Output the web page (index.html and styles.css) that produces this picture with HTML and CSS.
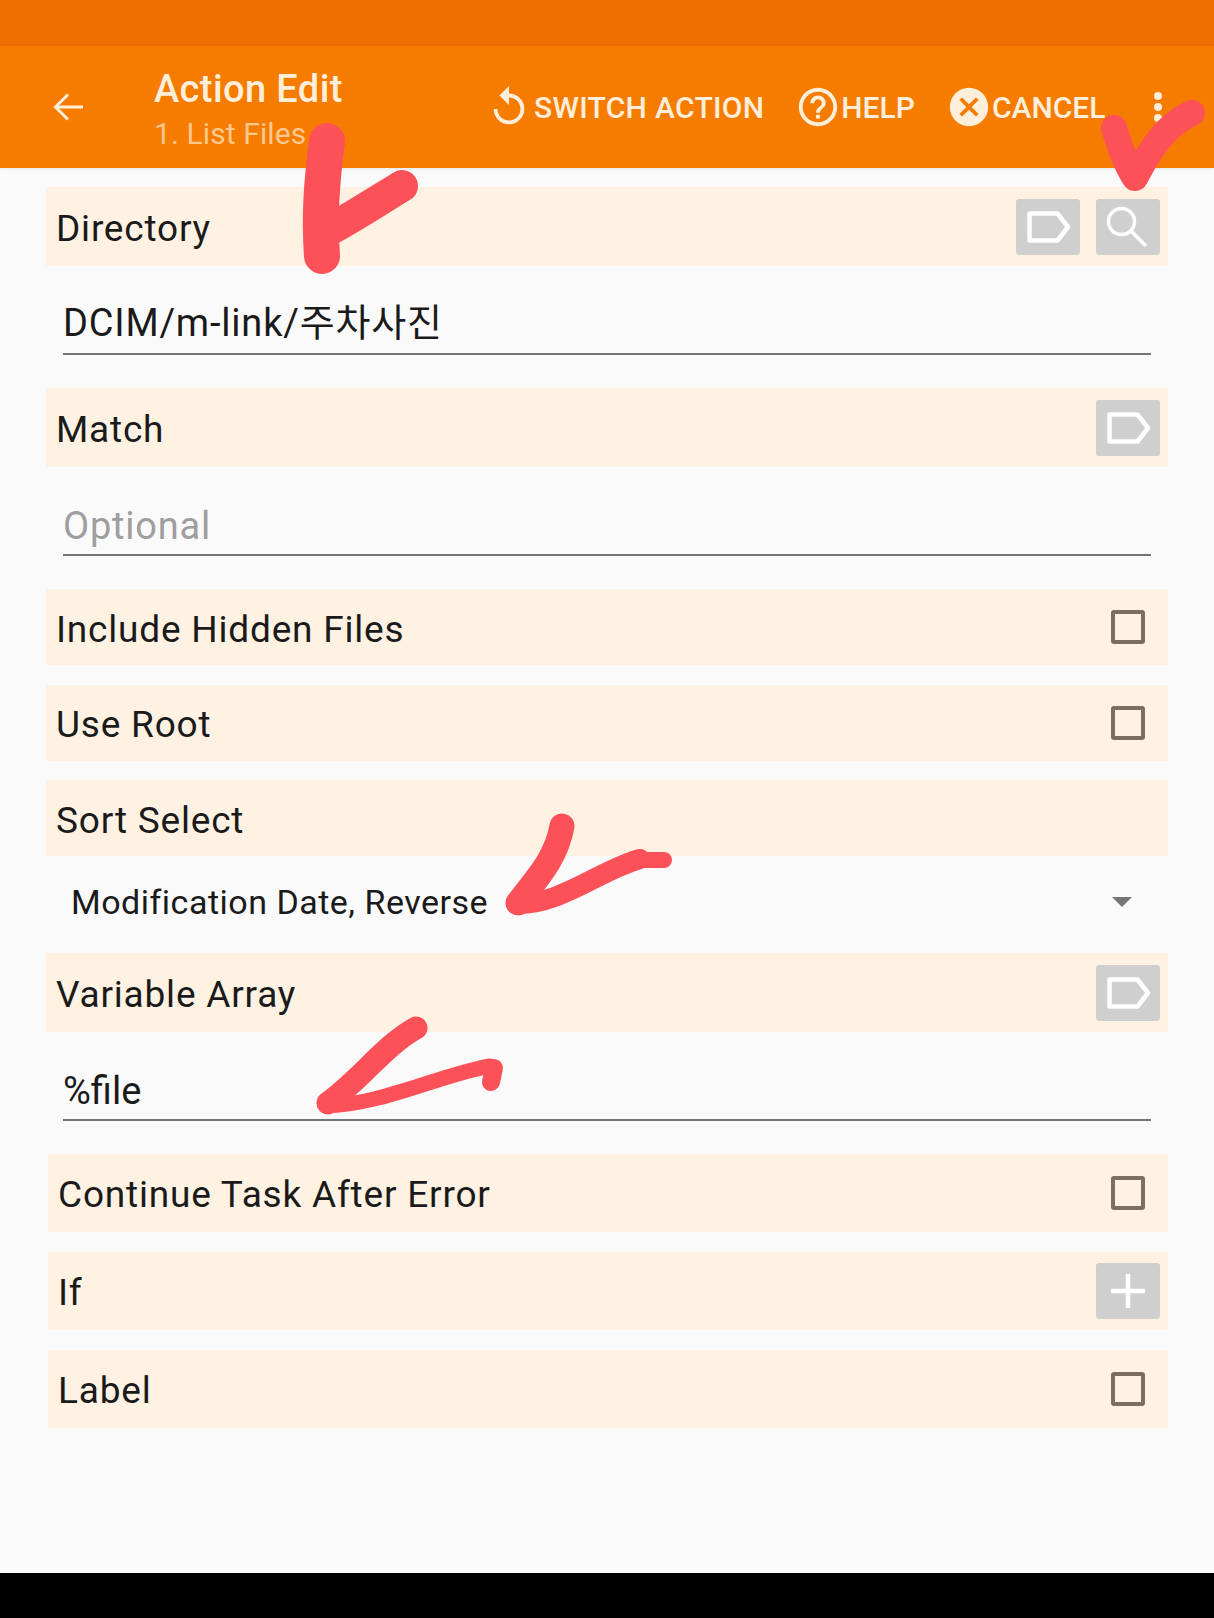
FILE: index.html
```html
<!DOCTYPE html>
<html lang="en">
<head>
  <meta charset="UTF-8" />
  <meta name="viewport" content="width=device-width, initial-scale=1.0" />
  <title>Action Edit</title>
  <link rel="stylesheet" href="styles.css">
</head>
<body>
  <div class="screen">
    <div class="status-bar"></div>
    <header class="app-bar">
      <svg class="back-icon" viewBox="0 0 32 32"><path d="M30 16H3M15 3.500 2.500 16 15 28.500" /></svg>
      <div class="titles">
        <h1>Action Edit</h1>
        <p>1. List Files</p>
      </div>
      <button class="bar-btn switch">
        <svg class="bar-icon" viewBox="0 0 24 24"><path d="M12 5V1L7 6l5 5V7c3.310 0 6 2.690 6 6s-2.690 6-6 6-6-2.690-6-6H4c0 4.420 3.580 8 8 8s8-3.580 8-8-3.580-8-8-8z" /></svg>
        SWITCH ACTION
      </button>
      <button class="bar-btn help">
        <svg class="bar-icon" viewBox="0 0 24 24"><path d="M11 18h2v-2h-2v2zm1-16C6.480 2 2 6.480 2 12s4.480 10 10 10 10-4.480 10-10S17.520 2 12 2zm0 18c-4.410 0-8-3.590-8-8s3.590-8 8-8 8 3.590 8 8-3.590 8-8 8zm0-14c-2.210 0-4 1.790-4 4h2c0-1.100.9-2 2-2s2 .9 2 2c0 2-3 1.750-3 5h2c0-2.250 3-2.500 3-5 0-2.210-1.790-4-4-4z" /></svg>
        HELP
      </button>
      <button class="bar-btn cancel">
        <svg class="bar-icon" viewBox="0 0 24 24"><path d="M12 2C6.470 2 2 6.470 2 12s4.470 10 10 10 10-4.470 10-10S17.530 2 12 2zm5 13.590L15.590 17 12 13.410 8.410 17 7 15.590 10.590 12 7 8.410 8.410 7 12 10.590 15.590 7 17 8.410 13.410 12 17 15.590z" /></svg>
        CANCEL
      </button>
      <span class="more"><i></i><i></i><i></i></span>
    </header>

    <main class="form">
      <div class="row tall">
        <span class="label">Directory</span>
        <div class="actions">
          <button class="square"><svg viewBox="0 0 64 56"><path d="M13.500 14.500h28L52 28 41.500 41.500h-28z" /></svg></button>
          <button class="square"><svg class="thin" viewBox="0 0 64 56"><circle cx="25.500" cy="22.500" r="13" /><path d="M35 32l15 15" /></svg></button>
        </div>
      </div>
      <div class="field">DCIM/m-link/주차사진</div>

      <div class="row tall">
        <span class="label">Match</span>
        <div class="actions">
          <button class="square"><svg viewBox="0 0 64 56"><path d="M13.500 14.500h28L52 28 41.500 41.500h-28z" /></svg></button>
        </div>
      </div>
      <div class="field placeholder">Optional</div>

      <div class="row"><span class="label">Include Hidden Files</span><span class="checkbox"></span></div>
      <div class="row"><span class="label">Use Root</span><span class="checkbox"></span></div>
      <div class="row flush"><span class="label">Sort Select</span></div>
      <div class="select">
        <span>Modification Date, Reverse</span>
        <span class="caret"></span>
      </div>

      <div class="row tall">
        <span class="label">Variable Array</span>
        <div class="actions">
          <button class="square"><svg viewBox="0 0 64 56"><path d="M13.500 14.500h28L52 28 41.500 41.500h-28z" /></svg></button>
        </div>
      </div>
      <div class="field tight">%file</div>

      <div class="row inset"><span class="label">Continue Task After Error</span><span class="checkbox"></span></div>
      <div class="row inset"><span class="label">If</span>
        <div class="actions">
          <button class="square"><svg viewBox="0 0 64 56"><path d="M15 28h34M32 11v34" /></svg></button>
        </div>
      </div>
      <div class="row inset"><span class="label">Label</span><span class="checkbox"></span></div>
    </main>

    <div class="nav-bar"></div>

    <!-- hand drawn check marks on top of the screenshot -->
    <svg class="marks" viewBox="0 0 1214 1618">
      <path class="mark" stroke-width="36" d="M327 141C322 180 319 215 322 256" />
      <path class="mark" stroke-width="32" d="M325 232C345 222 368 207 402 186" />
      <path class="mark" stroke-width="26" d="M1114 128C1120 148 1126 165 1135 178C1150 150 1165 125 1192 113" />
      <path class="mark" stroke-width="25" d="M562 826C556 860 535 880 518 903" />
      <path class="mark" stroke-width="20" d="M517 904C560 905 600 870 640 859" />
      <path class="mark" stroke-width="16" d="M640 860H664" />
      <path class="mark" stroke-width="23" d="M416 1028C385 1045 360 1080 328 1103" />
      <path class="mark" stroke-width="15" d="M326 1106C380 1105 440 1075 490 1066" />
      <path class="mark" stroke-width="18" d="M494 1068 491 1082" />
    </svg>
  </div>
</body>
</html>
```
FILE: styles.css
```css
/* Basic Reset */
* {
  margin: 0;
  padding: 0;
  box-sizing: border-box;
}
body {
  font-family: Roboto, "Noto Sans CJK KR", sans-serif;
  background-color: #fafafa;
  color: #1a1a1a;
}
button {
  border: none;
  background: none;
  font-family: inherit;
}
.screen {
  position: relative;
  width: 1214px;
  height: 1618px;
  display: flex;
  flex-direction: column;
  overflow: hidden;
}
/* Top bars */
.status-bar {
  height: 46px;
  background-color: #ef6e00;
}
.app-bar {
  height: 122px;
  background-color: #f67c00;
  display: flex;
  align-items: center;
  color: #ffeeda;
  box-shadow: 0 1px 3px rgba(0, 0, 0, 0.08);
}
.back-icon {
  width: 32px;
  height: 32px;
  margin-left: 53px;
  flex-shrink: 0;
  fill: none;
  stroke: #ffeeda;
  stroke-width: 3;
}
.titles {
  margin-left: 69px;
  margin-top: 8px;
  width: 336px;
  flex-shrink: 0;
}
.titles h1 {
  font-size: 38px;
  font-weight: 500;
  line-height: 42px;
  letter-spacing: 0.4px;
}
.titles p {
  margin-top: 4px;
  font-size: 30px;
  line-height: 40px;
  color: #fcc88e;
  letter-spacing: 0.1px;
}
.bar-btn {
  display: flex;
  align-items: center;
  gap: 4px;
  color: #ffeeda;
  font-size: 30px;
  font-weight: 500;
  white-space: nowrap;
}
.bar-icon {
  width: 46px;
  height: 46px;
  margin: 0 -4px;
  flex-shrink: 0;
  fill: #ffeeda;
  fill-rule: evenodd;
}
.switch {
  gap: 6px;
  letter-spacing: 0.3px;
}
.help {
  margin-left: 35px;
}
.cancel {
  margin-left: 35px;
}
.more {
  margin-left: 49px;
  display: flex;
  flex-direction: column;
  gap: 3px;
}
.more i {
  width: 8px;
  height: 8px;
  border-radius: 50%;
  background-color: #ffeeda;
}
/* Form rows */
.form {
  flex: 1;
  padding: 19px 46px 0;
}
.row {
  height: 76px;
  margin-bottom: 19.5px;
  padding: 0 8px 0 10px;
  background-color: #fff2e2;
  display: flex;
  align-items: center;
  justify-content: space-between;
  font-size: 37px;
  letter-spacing: 0.8px;
}
.row.tall {
  height: 79px;
  margin-bottom: 0;
}
.row.flush {
  margin-bottom: 0;
}
.row.inset {
  height: 77.5px;
  margin-bottom: 20.5px;
  margin-left: 2px;
}
.label {
  padding-top: 4px;
}
.actions {
  display: flex;
  gap: 16px;
}
.square {
  width: 64px;
  height: 56px;
  background-color: #cfcfcf;
  border-radius: 3px;
  display: block;
}
.square svg {
  display: block;
  width: 64px;
  height: 56px;
  fill: none;
  stroke: #fff;
  stroke-width: 4.500;
  stroke-linejoin: round;
}
.square svg.thin {
  stroke-width: 3.500;
}
.checkbox {
  width: 34px;
  height: 34px;
  margin-right: 15px;
  border: 4px solid #7a6f60;
  border-radius: 3px;
}
.field {
  height: 89px;
  margin: 0 17px 33px;
  padding: 0 0 6px;
  border-bottom: 2px solid #757575;
  display: flex;
  align-items: flex-end;
  font-size: 38px;
  letter-spacing: 0.8px;
}
.field.tight {
  letter-spacing: 0;
}
.placeholder {
  color: #9e9e9e;
}
.select {
  height: 97px;
  padding: 0 36px 5px 25px;
  display: flex;
  align-items: center;
  justify-content: space-between;
  font-size: 34px;
  letter-spacing: 0.5px;
}
.caret {
  border-left: 10px solid transparent;
  border-right: 10px solid transparent;
  border-top: 10px solid #757575;
}
.nav-bar {
  height: 45px;
  background-color: #000;
}
/* Red marks drawn over everything */
.marks {
  position: absolute;
  top: 0;
  left: 0;
  width: 1214px;
  height: 1618px;
  pointer-events: none;
}
.mark {
  fill: none;
  stroke: #fd5159;
  stroke-linecap: round;
  stroke-linejoin: round;
}
```
